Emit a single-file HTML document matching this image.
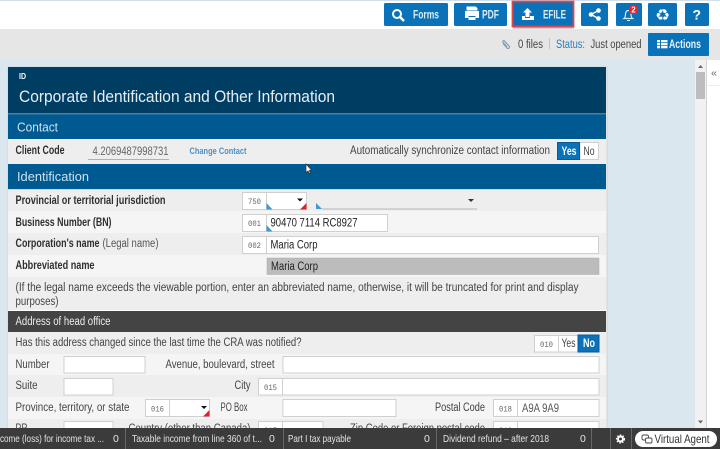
<!DOCTYPE html>
<html><head><meta charset="utf-8"><style>
html,body{margin:0;padding:0;background:#fff;width:720px;height:449px;overflow:hidden}
svg{display:block;filter:blur(.3px)}
text{font-family:"Liberation Sans",sans-serif;font-size:11.5px;fill:#444}
.b{font-weight:bold;fill:#2f2f2f;font-size:11.5px}
.w{fill:#fff}
.t{fill:#dcecf7;font-size:12px;font-weight:bold}
.c{font-family:"Liberation Mono",monospace;font-size:8.5px;fill:#666}
.f{fill:#e4e4e4;font-size:10.5px}
.i{fill:#fff;stroke:#d0d0d0}
</style></head><body>
<svg width="720" height="449" viewBox="0 0 720 449" xmlns="http://www.w3.org/2000/svg">
<rect width="720" height="449" fill="#fff"/>
<rect width="720" height="1" fill="#cfe0ec"/>
<rect y="29" width="720" height="31" fill="#e6e6e6"/>
<rect y="60" width="695" height="372" fill="#dbe7ef"/>
<rect x="695" y="60" width="11" height="372" fill="#f1f1f1"/>
<rect x="706" y="60" width="1" height="372" fill="#d5d5d5"/>
<rect x="707" y="85" width="13" height="1" fill="#eee"/>
<rect x="696" y="72" width="9" height="27" fill="#bdbdbd"/>
<path d="M698 68l2.500-3 2.500 3zM698 420.500l2.500 3 2.500-3z" fill="#666"/>
<text x="711" y="76" style="font-size:10px;fill:#666" textLength="6" lengthAdjust="spacingAndGlyphs">«</text>

<!-- top buttons -->
<g fill="#0a72b8">
<rect x="384" y="3" width="64" height="23" rx="1.500"/>
<rect x="454" y="3" width="53" height="23" rx="1.500"/>
<rect x="581" y="3" width="27" height="23" rx="1.500"/>
<rect x="616" y="3" width="26" height="23" rx="1.500"/>
<rect x="648" y="3" width="29" height="23" rx="1.500"/>
<rect x="685" y="3" width="24" height="23" rx="1.500"/>
<rect x="648" y="33" width="61" height="23" rx="1"/>
</g>
<rect x="512.500" y="1.500" width="61" height="25" fill="#0a72b8" stroke="#e0444c" stroke-width="1.800"/>
<path d="M513 28h61" stroke="#aaa" stroke-width="1"/>
<circle cx="397" cy="14" r="4" fill="none" stroke="#fff" stroke-width="2"/>
<path d="M400 17l4 4" stroke="#fff" stroke-width="2.400"/>
<text x="413" y="18.500" class="t" textLength="26" lengthAdjust="spacingAndGlyphs">Forms</text>
<path d="M467 10.500v-3.500h8.500l1.500 1.500v2M465.500 11.500h13v6h-2.500v-2h-8v2h-2.500z" fill="#fff" stroke="#fff" stroke-width="1"/>
<rect x="468.500" y="17" width="7" height="3" fill="#fff"/>
<text x="482" y="18.500" class="t" textLength="17" lengthAdjust="spacingAndGlyphs">PDF</text>
<path d="M527.500 8l4.500 4.500h-2.500v4.500h-4v-4.500h-2.500z" fill="#fff"/>
<path d="M522 16h3v2h5v-2h4v4h-12z" fill="#fff"/>
<text x="543" y="18.500" class="t" textLength="23" lengthAdjust="spacingAndGlyphs">EFILE</text>
<g fill="#fff"><circle cx="591" cy="14.500" r="2.300"/><circle cx="598.500" cy="10.500" r="2.300"/><circle cx="598.500" cy="18.500" r="2.300"/></g>
<path d="M591 14.500l7.500-4M591 14.500l7.500 4" stroke="#fff" stroke-width="1.300"/>
<path d="M624 18.500c1.500-1 1.500-3 1.500-4.500 0-2 1.300-3.500 2.500-3.500s3 1.500 3 3.500c0 1.500 0 3.500 1.500 4.500z" fill="none" stroke="#dcecf7" stroke-width="1.200"/>
<path d="M627 20h3v1h-3z" fill="#dcecf7"/>
<rect x="629" y="5" width="9" height="9" rx="2.500" fill="#e8222e"/>
<text x="631.300" y="12.500" style="fill:#fff;font-size:8px;font-weight:bold">2</text>
<text x="655" y="20.500" style="font-family:'DejaVu Sans',sans-serif;font-size:16px;fill:#fff;font-weight:bold" textLength="15" lengthAdjust="spacingAndGlyphs">♻</text>
<text x="692.500" y="19.500" style="fill:#fff;font-size:14px;font-weight:bold">?</text>
<g fill="#fff"><rect x="657" y="40" width="3" height="2.300"/><rect x="661" y="40" width="6.500" height="2.300"/><rect x="657" y="43" width="3" height="2.300"/><rect x="661" y="43" width="6.500" height="2.300"/><rect x="657" y="46" width="3" height="2.300"/><rect x="661" y="46" width="6.500" height="2.300"/></g>
<text x="669" y="48" style="fill:#e8f2f9;font-size:12px;font-weight:bold" textLength="32" lengthAdjust="spacingAndGlyphs">Actions</text>

<path d="M503 43.500l4 4.500c1.500 1.500 3.500-.5 2-2l-4.500-5c-1-1-2.300.3-1.500 1.300l4 4.500" fill="none" stroke="#7a9cb8" stroke-width="1.100"/>
<text x="518" y="48" textLength="25" lengthAdjust="spacingAndGlyphs">0 files</text>
<rect x="549" y="38" width="1" height="11" fill="#c4c4c4"/>
<text x="556" y="48" style="fill:#2f7cb3" textLength="29" lengthAdjust="spacingAndGlyphs">Status:</text>
<text x="590.500" y="48" textLength="51" lengthAdjust="spacingAndGlyphs">Just opened</text>

<!-- form panel -->
<rect x="8" y="67" width="599" height="365" fill="#eee" stroke="#b8c4cc" stroke-width="0.500"/>
<rect x="8" y="67" width="598" height="46" fill="#003d63"/>
<rect x="8" y="113" width="598" height="1.500" fill="#4d7c9c"/>
<rect x="8" y="114.500" width="598" height="24.500" fill="#005a92"/>
<rect x="8" y="139" width="598" height="25" fill="#eee"/>
<rect x="8" y="164" width="598" height="25" fill="#005a92"/>
<rect x="8" y="189" width="598" height="1" fill="#cdd8df"/>
<rect x="8" y="190" width="598" height="21" fill="#eee"/>
<rect x="8" y="211" width="598" height="22" fill="#f5f5f5"/>
<rect x="8" y="233" width="598" height="22" fill="#eee"/>
<rect x="8" y="255" width="598" height="22" fill="#f5f5f5"/>
<rect x="8" y="277" width="598" height="33" fill="#eee"/>
<rect x="8" y="310" width="598" height="1" fill="#fff"/>
<rect x="8" y="311" width="598" height="21" fill="#444"/>
<rect x="8" y="332" width="598" height="22" fill="#eee"/>
<rect x="8" y="354" width="598" height="21" fill="#f5f5f5"/>
<rect x="8" y="375" width="598" height="22" fill="#eee"/>
<rect x="8" y="397" width="598" height="22" fill="#f5f5f5"/>
<rect x="8" y="419" width="598" height="13" fill="#eee"/>

<text x="19" y="79" style="fill:#fff;font-size:8px;font-weight:bold" textLength="7" lengthAdjust="spacingAndGlyphs">ID</text>
<text x="19" y="102" style="fill:#e6eef4;font-size:16.500px" textLength="316" lengthAdjust="spacingAndGlyphs">Corporate Identification and Other Information</text>
<text x="17" y="131.500" style="fill:#cfe0ec;font-size:13px" textLength="41" lengthAdjust="spacingAndGlyphs">Contact</text>
<text x="17" y="181" style="fill:#cfe0ec;font-size:13px" textLength="72" lengthAdjust="spacingAndGlyphs">Identification</text>

<text x="15.500" y="154" class="b" textLength="49" lengthAdjust="spacingAndGlyphs">Client Code</text>
<text x="92.500" y="155" style="fill:#666" textLength="76" lengthAdjust="spacingAndGlyphs">4.2069487998731</text>
<rect x="88" y="159" width="81" height="1" fill="#b0b0b0"/>
<text x="189.500" y="154" style="font-size:9.500px;fill:#4d90c4;font-weight:bold" textLength="57" lengthAdjust="spacingAndGlyphs">Change Contact</text>
<text x="350" y="154" textLength="200" lengthAdjust="spacingAndGlyphs">Automatically synchronize contact information</text>
<rect x="580" y="142.500" width="18.500" height="17" fill="#fff" stroke="#d0d0d0"/>
<rect x="557.500" y="142.500" width="22" height="17" fill="#0a72b8" stroke="#0b5c96"/>
<text x="561.500" y="155" style="fill:#fff;font-weight:bold" textLength="15" lengthAdjust="spacingAndGlyphs">Yes</text>
<text x="583.500" y="155" textLength="11" lengthAdjust="spacingAndGlyphs">No</text>
<path d="M306 164v8.500l2-1.500 1.500 2.500 1-.5-1.300-2.500 2.300-.3z" fill="#fff" stroke="#333" stroke-width=".7"/>

<text x="15.500" y="204" class="b" textLength="150" lengthAdjust="spacingAndGlyphs">Provincial or territorial jurisdiction</text>
<text x="15.500" y="226" class="b" textLength="96" lengthAdjust="spacingAndGlyphs">Business Number (BN)</text>
<text x="15.500" y="247" class="b" textLength="84" lengthAdjust="spacingAndGlyphs">Corporation's name</text>
<text x="102.500" y="247" style="fill:#555" textLength="56" lengthAdjust="spacingAndGlyphs">(Legal name)</text>
<text x="15.500" y="269" class="b" textLength="79" lengthAdjust="spacingAndGlyphs">Abbreviated name</text>
<text x="15.500" y="291" textLength="563" lengthAdjust="spacingAndGlyphs">(If the legal name exceeds the viewable portion, enter an abbreviated name, otherwise, it will be truncated for print and display</text>
<text x="15.500" y="305" textLength="43" lengthAdjust="spacingAndGlyphs">purposes)</text>

<!-- 750 -->
<rect x="242.500" y="192.500" width="24" height="17" class="i"/>
<text x="248" y="204" class="c" textLength="13" lengthAdjust="spacingAndGlyphs">750</text>
<rect x="266.500" y="192.500" width="40" height="17" class="i"/>
<path d="M297 198.500h6l-3 3z" fill="#111"/>
<path d="M266.500 203l6 6.500h-6z" fill="#3c9ad6"/>
<path d="M306.500 203v6.500h-6.500z" fill="#e2202c"/>
<path d="M316 203l6 6h-6z" fill="#3c9ad6"/>
<rect x="322" y="208.500" width="155" height="1" fill="#b5b5b5"/>
<path d="M468 199h6l-3 3z" fill="#333"/>
<!-- 001 -->
<rect x="242.500" y="214.500" width="24" height="17" class="i"/>
<text x="248" y="226" class="c" textLength="13" lengthAdjust="spacingAndGlyphs">001</text>
<rect x="266.500" y="214.500" width="121" height="17" class="i"/>
<path d="M266.500 225l6 6.500h-6z" fill="#3c9ad6"/>
<text x="270.500" y="226.500" style="fill:#222" textLength="87" lengthAdjust="spacingAndGlyphs">90470 7114 RC8927</text>
<!-- 002 -->
<rect x="242.500" y="236.500" width="24" height="17" class="i"/>
<text x="248" y="248" class="c" textLength="13" lengthAdjust="spacingAndGlyphs">002</text>
<rect x="266.500" y="236.500" width="332" height="17" class="i"/>
<text x="270.500" y="248.500" style="fill:#222" textLength="47" lengthAdjust="spacingAndGlyphs">Maria Corp</text>
<rect x="267" y="258" width="332" height="16.500" fill="#bcbcbc" stroke="#aaa" stroke-width=".5"/>
<text x="271" y="270" style="fill:#222" textLength="47" lengthAdjust="spacingAndGlyphs">Maria Corp</text>

<text x="15.500" y="325" style="fill:#eee" textLength="95" lengthAdjust="spacingAndGlyphs">Address of head office</text>
<text x="15.500" y="346" textLength="286" lengthAdjust="spacingAndGlyphs">Has this address changed since the last time the CRA was notified?</text>
<rect x="534.500" y="335.500" width="24" height="16.500" class="i"/>
<text x="540" y="347" class="c" textLength="13" lengthAdjust="spacingAndGlyphs">010</text>
<rect x="558.500" y="335.500" width="20" height="16.500" class="i"/>
<text x="561.500" y="347" textLength="14" lengthAdjust="spacingAndGlyphs">Yes</text>
<rect x="578" y="335" width="21" height="17" fill="#0a72b8" stroke="#0b5c96"/>
<text x="583" y="347" style="fill:#fff;font-weight:bold" textLength="12" lengthAdjust="spacingAndGlyphs">No</text>

<text x="15.500" y="368" textLength="34" lengthAdjust="spacingAndGlyphs">Number</text>
<rect x="64" y="356.500" width="81" height="16.500" class="i"/>
<text x="165.500" y="368" textLength="109" lengthAdjust="spacingAndGlyphs">Avenue, boulevard, street</text>
<rect x="283" y="356.500" width="316" height="16.500" class="i"/>

<text x="15.500" y="389" textLength="22" lengthAdjust="spacingAndGlyphs">Suite</text>
<rect x="64" y="378.500" width="49" height="16.500" class="i"/>
<text x="234.500" y="389" textLength="16" lengthAdjust="spacingAndGlyphs">City</text>
<rect x="258.500" y="378.500" width="24" height="16.500" class="i"/>
<text x="264" y="390" class="c" textLength="13" lengthAdjust="spacingAndGlyphs">015</text>
<rect x="282.500" y="378.500" width="316.500" height="16.500" class="i"/>

<text x="15.500" y="411" textLength="114" lengthAdjust="spacingAndGlyphs">Province, territory, or state</text>
<rect x="145.500" y="399.500" width="24" height="17" class="i"/>
<text x="151" y="411.500" class="c" textLength="13" lengthAdjust="spacingAndGlyphs">016</text>
<rect x="169.500" y="399.500" width="40" height="17" class="i"/>
<path d="M201 406h6l-3 3z" fill="#111"/>
<path d="M209.500 410v6.500h-6.500z" fill="#e2202c"/>
<text x="220.500" y="411" textLength="27" lengthAdjust="spacingAndGlyphs">PO Box</text>
<rect x="283" y="399.500" width="113" height="17" class="i"/>
<text x="435" y="411" textLength="50" lengthAdjust="spacingAndGlyphs">Postal Code</text>
<rect x="493.500" y="399.500" width="24" height="17" class="i"/>
<text x="499" y="411.500" class="c" textLength="13" lengthAdjust="spacingAndGlyphs">018</text>
<rect x="517.500" y="399.500" width="81.500" height="17" class="i"/>
<text x="522" y="412" style="fill:#555" textLength="37" lengthAdjust="spacingAndGlyphs">A9A 9A9</text>

<text x="15.500" y="432" textLength="12" lengthAdjust="spacingAndGlyphs">PR</text>
<rect x="64" y="421.500" width="49" height="17" class="i"/>
<text x="128.500" y="432" textLength="122" lengthAdjust="spacingAndGlyphs">Country (other than Canada)</text>
<rect x="258.500" y="421.500" width="24" height="17" class="i"/>
<text x="264" y="433" class="c" textLength="13" lengthAdjust="spacingAndGlyphs">017</text>
<rect x="282.500" y="421.500" width="40.500" height="17" class="i"/>
<text x="350" y="432" textLength="135" lengthAdjust="spacingAndGlyphs">Zip Code or Foreign postal code</text>
<rect x="493.500" y="421.500" width="24" height="17" class="i"/>
<text x="499" y="433" class="c" textLength="13" lengthAdjust="spacingAndGlyphs">019</text>
<rect x="517.500" y="421.500" width="81.500" height="17" class="i"/>

<!-- footer -->
<rect y="428" width="720" height="21" fill="#3b3b3b"/>
<g fill="#666"><rect x="125" y="428" width="1" height="21"/><rect x="283" y="428" width="1" height="21"/><rect x="436" y="428" width="1" height="21"/><rect x="591" y="428" width="1" height="21"/><rect x="610" y="428" width="1" height="21"/><rect x="631" y="428" width="1" height="21"/></g>
<text x="0" y="442" class="f" textLength="104" lengthAdjust="spacingAndGlyphs">come (loss) for income tax ...</text>
<text x="113" y="442" class="f">0</text>
<text x="132" y="442" class="f" textLength="130" lengthAdjust="spacingAndGlyphs">Taxable income from line 360 of t...</text>
<text x="269" y="442" class="f">0</text>
<text x="288" y="442" class="f" textLength="63" lengthAdjust="spacingAndGlyphs">Part I tax payable</text>
<text x="424" y="442" class="f">0</text>
<text x="443" y="442" class="f" textLength="106" lengthAdjust="spacingAndGlyphs">Dividend refund – after 2018</text>
<text x="580" y="442" class="f">0</text>
<circle cx="620.500" cy="439" r="2.500" fill="none" stroke="#fff" stroke-width="2"/>
<circle cx="620.500" cy="439" r="4" fill="none" stroke="#fff" stroke-width="1.200" stroke-dasharray="1.500 1.500"/>
<rect x="635" y="431" width="82" height="16" rx="8" fill="#fff"/>
<rect x="642" y="435" width="6.500" height="5" rx="1.500" fill="none" stroke="#444" stroke-width=".9"/>
<rect x="645.500" y="438" width="6.500" height="5" rx="1.500" fill="#fff" stroke="#444" stroke-width=".9"/>
<text x="654.500" y="443" style="font-size:12px;fill:#333" textLength="55" lengthAdjust="spacingAndGlyphs">Virtual Agent</text>
</svg>
</body></html>
